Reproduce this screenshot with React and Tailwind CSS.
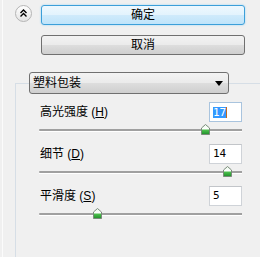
import React from "react";

// collapse toggle drawn as a small round button with a double chevron
const CollapseButton = () => (
  <svg width="17" height="17" viewBox="0 0 17 17" className="block shrink-0">
    <defs>
      <linearGradient id="cb" x1="0" y1="0" x2="0" y2="1">
        <stop offset="0" stopColor="#ffffff" />
        <stop offset="1" stopColor="#e4e4e4" />
      </linearGradient>
    </defs>
    <circle cx="8.5" cy="8.5" r="8" fill="url(#cb)" stroke="#b4b4b4" />
    <polyline points="5.5,8 8.5,5 11.5,8" fill="none" stroke="#000" strokeWidth="1.4" />
    <polyline points="5.5,11.5 8.5,8.5 11.5,11.5" fill="none" stroke="#000" strokeWidth="1.4" />
  </svg>
);

const Thumb = () => (
  <svg width="9" height="11" viewBox="0 0 9 11" className="block">
    <defs>
      <linearGradient id="th" x1="0" y1="0" x2="0" y2="1">
        <stop offset="0" stopColor="#e8f8e8" />
        <stop offset="0.45" stopColor="#ffffff" />
        <stop offset="0.55" stopColor="#4cc04c" />
        <stop offset="1" stopColor="#1f8f2a" />
      </linearGradient>
    </defs>
    <path d="M4.5 0.5 L8.5 4 L8.5 10.5 L0.5 10.5 L0.5 4 Z" fill="url(#th)" stroke="#7a8a7a" />
  </svg>
);

const Slider = ({ thumbLeft }) => (
  <div className="relative h-[22px] pt-[7px]">
    <div className="h-[2px] rounded-l-full bg-[#a0a0a0]" />
    <div className="h-[1px] bg-white" />
    <div className="absolute top-[2px] leading-none" style={{ left: thumbLeft }}>
      <Thumb />
    </div>
  </div>
);

const Row = ({ label, accel, value, focused, thumbLeft }) => (
  <div>
    <div className="flex h-[20px] items-center justify-between">
      <span className="pl-[1px] text-[12px] leading-none text-black">
        {label} (<span className="underline">{accel}</span>)
      </span>
      <div
        className={`flex h-[20px] w-[33px] items-center border bg-white pl-[3px] font-['DejaVu_Sans_Mono',monospace] text-[11px] ${
          focused ? "border-[#a9c4de]" : "border-[#cfd3d8] border-t-[#c2c5c9]"
        }`}
      >
        {focused ? (
          <>
            <span className="bg-[#3399ff] leading-[11px] text-white">{value}</span>
            <span className="h-[11px] w-[1px] bg-[#c06a20]" />
          </>
        ) : (
          <span className="text-black">{value}</span>
        )}
      </div>
    </div>
    <Slider thumbLeft={thumbLeft} />
  </div>
);

export default function App() {
  return (
    <div className="h-[257px] w-[260px] overflow-hidden bg-[#f0f0f0] pl-[2px] font-['Liberation_Sans','Noto_Sans_CJK_SC',sans-serif]">
      <div className="flex h-full flex-col border-l border-[#fbfbfb]">
        {/* buttons */}
        <div className="flex items-start pt-[5px] pl-[12px]">
          <CollapseButton />
          <button className="ml-[9px] flex h-[20px] w-[204px] items-center justify-center rounded-[3px] border border-[#3c9fd9] bg-[linear-gradient(#eef8fe_0%,#e3f3fd_48%,#cfeafb_52%,#bfe4fa_100%)] text-[12px] leading-none text-black shadow-[0_0_2px_#8fd0f5]">
            确定
          </button>
        </div>
        <button className="mt-[10px] ml-[38px] flex h-[20px] w-[204px] items-center justify-center rounded-[3px] border border-[#707070] bg-[linear-gradient(#f3f3f3_0%,#ebebeb_48%,#dddddd_52%,#cfcfcf_100%)] text-[12px] leading-none text-black">
          取消
        </button>

        {/* group box */}
        <div className="mt-[28px] ml-[12px] flex-1 border-t border-l border-[#d6dee6]">
          <div className="-mt-[12px] ml-[13px] flex h-[22px] w-[200px] items-center justify-between rounded-[3px] border border-[#707070] bg-[linear-gradient(#f3f3f3_0%,#ebebeb_48%,#dddddd_52%,#cfcfcf_100%)] pr-[5px] pl-[3px]">
            <span className="text-[12px] leading-none text-black">塑料包装</span>
            <svg width="8" height="5" viewBox="0 0 8 5" className="block">
              <path d="M0 0 H8 L4 5 Z" fill="#000" />
            </svg>
          </div>

          <div className="mt-[8px] ml-[23px] w-[203px]">
            <Row label="高光强度" accel="H" value="17" focused thumbLeft={162} />
            <Row label="细节" accel="D" value="14" thumbLeft={184} />
            <Row label="平滑度" accel="S" value="5" thumbLeft={54} />
          </div>
        </div>
      </div>
    </div>
  );
}
